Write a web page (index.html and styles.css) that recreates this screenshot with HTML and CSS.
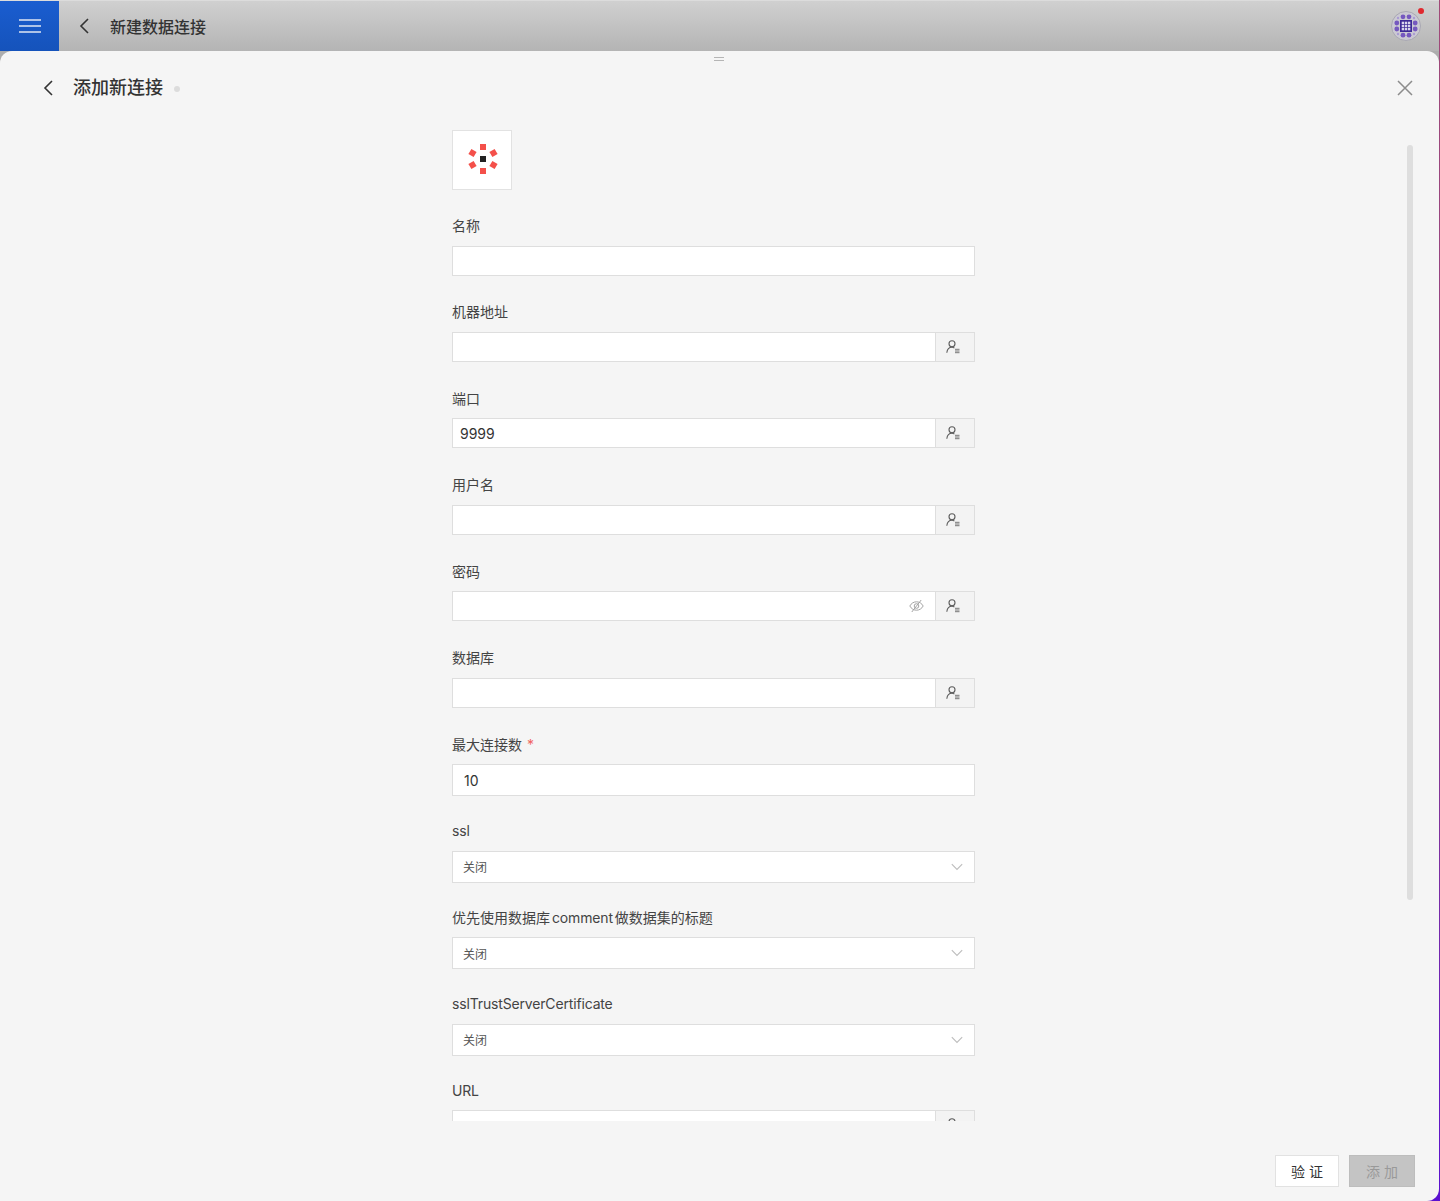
FILE: index.html
```html
<!DOCTYPE html>
<html lang="zh-CN">
<head>
<meta charset="utf-8">
<title>新建数据连接</title>
<link rel="stylesheet" href="styles.css">
</head>
<body>
<svg class="defs" width="0" height="0" aria-hidden="true">
  <symbol id="user" viewBox="0 0 14 14">
    <circle cx="6" cy="3.800" r="3" fill="none" stroke="#5c5c5c" stroke-width="1.100"/>
    <path d="M.8 12.800C1.200 9.500 3.200 7.300 6 7.300c.9 0 1.700.2 2.400.6" fill="none" stroke="#5c5c5c" stroke-width="1.100"/>
    <path d="M9 9.300h4.500M9 11h4.500M9 12.700h4.500" stroke="#777" stroke-width="1"/>
  </symbol>
  <symbol id="chev" viewBox="0 0 12 8">
    <path d="M.8 1.200 6 6.400l5.200-5.200" fill="none" stroke="#bdbdbd" stroke-width="1.100"/>
  </symbol>
</svg>
<header class="topbar">
  <div class="menu-btn">
    <svg width="22" height="14" viewBox="0 0 22 14"><path d="M0 1h22M0 7h22M0 13h22" stroke="#dfe6f3" stroke-width="1.600"/></svg>
  </div>
  <svg class="back-top" width="10" height="16" viewBox="0 0 10 16"><path d="M9 1 2 8l7 7" fill="none" stroke="#333" stroke-width="1.600"/></svg>
  <h1 class="top-title">新建数据连接</h1>
  <div class="avatar">
    <svg width="30" height="30" viewBox="0 0 30 30">
      <circle cx="15" cy="15" r="14.500" fill="#cbc9d3" stroke="#a9a8b2" stroke-width="1"/>
      <g fill="#7558bf">
        <circle cx="12" cy="5.800" r="2.400"/><circle cx="18" cy="5.800" r="2.400"/>
        <circle cx="12" cy="24.200" r="2.400"/><circle cx="18" cy="24.200" r="2.400"/>
        <circle cx="5.800" cy="12" r="2.400"/><circle cx="5.800" cy="18" r="2.400"/>
        <circle cx="24.200" cy="12" r="2.400"/><circle cx="24.200" cy="18" r="2.400"/>
      </g>
      <g fill="#a99bd3">
        <circle cx="7" cy="7" r="1.200"/><circle cx="23" cy="7" r="1.200"/>
        <circle cx="7" cy="23" r="1.200"/><circle cx="23" cy="23" r="1.200"/>
      </g>
      <rect x="9" y="9" width="12" height="12" fill="#3d2a96"/>
      <g fill="#d9d5ee">
        <rect x="10.700" y="10.700" width="2.400" height="2.400"/><rect x="13.800" y="10.700" width="2.400" height="2.400"/><rect x="16.900" y="10.700" width="2.400" height="2.400"/>
        <rect x="10.700" y="13.800" width="2.400" height="2.400"/><rect x="13.800" y="13.800" width="2.400" height="2.400"/><rect x="16.900" y="13.800" width="2.400" height="2.400"/>
        <rect x="10.700" y="16.900" width="2.400" height="2.400"/><rect x="13.800" y="16.900" width="2.400" height="2.400"/><rect x="16.900" y="16.900" width="2.400" height="2.400"/>
      </g>
    </svg>
    <span class="dot"></span>
  </div>
</header>

<main class="sheet">
  <div class="handle"></div>
  <div class="sheet-head">
    <svg class="back" width="10" height="16" viewBox="0 0 10 16"><path d="M9 1 2 8l7 7" fill="none" stroke="#333" stroke-width="1.600"/></svg>
    <h2 class="sheet-title">添加新连接</h2>
    <span class="status"></span>
    <svg class="close" width="16" height="16" viewBox="0 0 16 16"><path d="M1 1l14 14M15 1 1 15" stroke="#8c8c8c" stroke-width="1.500"/></svg>
  </div>

  <div class="scroll">
    <form class="form">
      <div class="logo">
        <svg width="32" height="32" viewBox="0 0 32 32">
          <rect x="13" y="13" width="6" height="6" fill="#222"/>
          <g fill="#f4504a">
            <rect x="13" y="1" width="6" height="6"/>
            <rect x="13" y="25" width="6" height="6"/>
            <rect x="2.500" y="7" width="6" height="6" transform="rotate(30 5.500 10)"/>
            <rect x="23.500" y="7" width="6" height="6" transform="rotate(-30 26.500 10)"/>
            <rect x="2.500" y="19" width="6" height="6" transform="rotate(-30 5.500 22)"/>
            <rect x="23.500" y="19" width="6" height="6" transform="rotate(30 26.500 22)"/>
          </g>
        </svg>
      </div>

      <div class="field">
        <label class="label">名称</label>
        <div class="group"><div class="input"></div></div>
      </div>
      <div class="field">
        <label class="label">机器地址</label>
        <div class="group"><div class="input"></div><div class="addon"><svg width="14" height="14"><use href="#user"/></svg></div></div>
      </div>
      <div class="field">
        <label class="label">端口</label>
        <div class="group"><div class="input">9999</div><div class="addon"><svg width="14" height="14"><use href="#user"/></svg></div></div>
      </div>
      <div class="field">
        <label class="label">用户名</label>
        <div class="group"><div class="input"></div><div class="addon"><svg width="14" height="14"><use href="#user"/></svg></div></div>
      </div>
      <div class="field">
        <label class="label">密码</label>
        <div class="group">
          <div class="input input-pw">
            <svg width="15" height="14" viewBox="0 0 15 14"><path d="M.8 7C2.300 4.300 4.700 2.800 7.500 2.800S12.700 4.300 14.200 7c-1.500 2.700-3.900 4.200-6.700 4.200S2.300 9.700.8 7Z" fill="none" stroke="#a3a3a3"/><circle cx="7.500" cy="7" r="2.300" fill="none" stroke="#a3a3a3"/><path d="M12.200 1 2.800 13" stroke="#a3a3a3"/></svg>
          </div>
          <div class="addon"><svg width="14" height="14"><use href="#user"/></svg></div>
        </div>
      </div>
      <div class="field">
        <label class="label">数据库</label>
        <div class="group"><div class="input"></div><div class="addon"><svg width="14" height="14"><use href="#user"/></svg></div></div>
      </div>
      <div class="field">
        <label class="label">最大连接数<span class="req">*</span></label>
        <div class="group tall"><div class="input num">10</div></div>
      </div>
      <div class="field">
        <label class="label"><span class="en">ssl</span></label>
        <div class="select"><span>关闭</span><svg width="12" height="8"><use href="#chev"/></svg></div>
      </div>
      <div class="field">
        <label class="label">优先使用数据库<span class="en en-gap">comment</span>做数据集的标题</label>
        <div class="select"><span>关闭</span><svg width="12" height="8"><use href="#chev"/></svg></div>
      </div>
      <div class="field">
        <label class="label"><span class="en">sslTrustServerCertificate</span></label>
        <div class="select"><span>关闭</span><svg width="12" height="8"><use href="#chev"/></svg></div>
      </div>
      <div class="field">
        <label class="label"><span class="en">URL</span></label>
        <div class="group"><div class="input"></div><div class="addon"><svg width="14" height="14"><use href="#user"/></svg></div></div>
      </div>
    </form>
    <div class="scrollbar"></div>
  </div>

  <footer class="foot">
    <button class="btn btn-check" type="button">验 证</button>
    <button class="btn btn-off" type="button">添 加</button>
  </footer>
</main>
</body>
</html>
```

FILE: styles.css
```css
* { box-sizing: border-box; }
html, body { margin: 0; height: 100%; }
body {
  width: 1440px;
  height: 1201px;
  overflow: hidden;
  position: relative;
  background:
    linear-gradient(#adadad, #adadad) 0 0 / 1439px 70px no-repeat,
    linear-gradient(180deg, #a04a78 0, #8a3a90 60%, #5a10d0 100%);
  font-family: Inter, "Noto Sans CJK SC", sans-serif;
  color: #333;
  display: flex;
  flex-direction: column;
}
.defs { position: absolute; }

.topbar {
  height: 51px;
  flex: none;
  margin-right: 1px;
  display: flex;
  align-items: center;
  background: linear-gradient(180deg, #d0d0d0 0, #b4b4b4 100%);
  border-top: 1px solid #dcdcdc;
}
.menu-btn {
  width: 59px;
  height: 100%;
  flex: none;
  display: flex;
  align-items: center;
  justify-content: center;
  background: linear-gradient(180deg, #1a5dd0 0, #1553bb 100%);
}
.back-top { margin-left: 20px; flex: none; }
.top-title {
  margin: 0 0 0 21px;
  font-size: 16px;
  font-weight: 500;
  color: #333;
  letter-spacing: 0;
}
.avatar {
  margin-left: auto;
  margin-right: 18px;
  position: relative;
  width: 30px;
  height: 30px;
}
.avatar svg { display: block; }
.dot {
  position: absolute;
  top: -3px;
  right: -3px;
  width: 6px;
  height: 6px;
  border-radius: 50%;
  background: #e0282e;
}

.sheet {
  flex: 1;
  min-height: 0;
  margin-right: 1px;
  position: relative;
  display: flex;
  flex-direction: column;
  background: #f5f5f5;
  border-radius: 12px 12px 12px 0;
}
.handle {
  position: absolute;
  top: 6px;
  left: 714px;
  width: 10px;
  height: 4px;
  border-top: 1px solid #b5b5b5;
  border-bottom: 1px solid #b5b5b5;
}
.sheet-head {
  height: 79px;
  flex: none;
  display: flex;
  align-items: center;
  padding: 0 26px 6px 43px;
}
.back { flex: none; }
.sheet-title {
  margin: 0 0 0 20px;
  font-size: 18px;
  line-height: 26px;
  font-weight: 500;
  color: #333;
}
.status {
  margin-left: 11px;
  margin-top: 2px;
  width: 6px;
  height: 6px;
  border-radius: 50%;
  background: #dcdcdc;
}
.close { margin-left: auto; }

.scroll {
  height: 991px;
  flex: none;
  overflow: hidden;
  position: relative;
}
.form {
  width: 523px;
  margin-left: 452px;
}
.logo {
  width: 60px;
  height: 60px;
  margin-bottom: 25.9px;
  background: #fff;
  border: 1px solid #e2e2e2;
  display: flex;
  align-items: center;
  justify-content: center;
  padding-left: 2px;
  padding-bottom: 2px;
}
.field { height: 86.48px; }
.label {
  display: block;
  height: 20px;
  margin-bottom: 9.62px;
  font-size: 14px;
  line-height: 20px;
  color: #444;
  white-space: nowrap;
}
.en { letter-spacing: -0.16px; }
.en-gap { margin: 0 2px; }
.req { color: #f0625f; margin-left: 5px; }
.group {
  display: flex;
  height: 30px;
}
.group.tall { height: 32px; }
.input {
  flex: 1;
  min-width: 0;
  padding: 0 7px;
  display: flex;
  align-items: center;
  background: #fff;
  border: 1px solid #dedede;
  font-size: 14px;
  color: #333;
}
.input.num { padding: 0 11px; }
.input-pw { justify-content: flex-end; padding-right: 11px; }
.addon {
  width: 40px;
  flex: none;
  display: flex;
  align-items: center;
  justify-content: center;
  padding-right: 5px;
  margin-left: -1px;
  background: #f3f3f3;
  border: 1px solid #dedede;
}
.addon svg { display: block; }
.select {
  height: 32px;
  display: flex;
  align-items: center;
  justify-content: space-between;
  padding: 0 11px 0 10px;
  background: #fff;
  border: 1px solid #dedede;
  font-size: 12px;
  color: #555;
}
.scrollbar {
  position: absolute;
  top: 15px;
  right: 26px;
  width: 6px;
  height: 755px;
  border-radius: 3px;
  background: #dedede;
}
.foot {
  flex: 1;
  display: flex;
  justify-content: flex-end;
  align-items: flex-start;
  gap: 10px;
  padding: 34px 24px 0 0;
}
.btn {
  height: 32px;
  padding: 0;
  background: #fff;
  border: 1px solid #e2e2e2;
  font-family: inherit;
  font-size: 14px;
  color: #333;
}
.btn-check { width: 64px; }
.btn-off {
  width: 66px;
  background: #c4c4c4;
  border-color: #bdbdbd;
  color: #999;
}
```
